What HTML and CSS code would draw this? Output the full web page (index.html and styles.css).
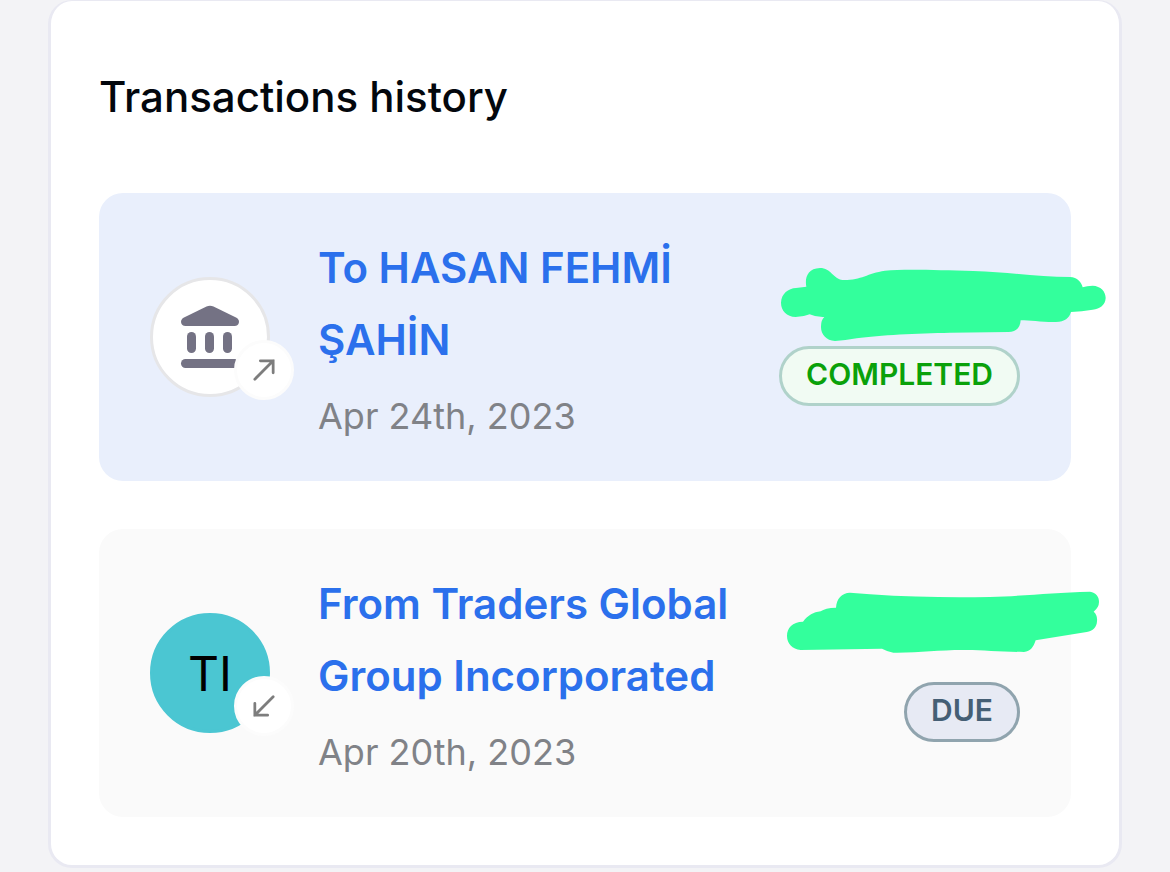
FILE: index.html
```html
<!DOCTYPE html>
<html lang="en">
<head>
  <meta charset="UTF-8">
  <meta name="viewport" content="width=device-width, initial-scale=1">
  <title>Transactions history</title>
  <link rel="stylesheet" href="styles.css">
</head>
<body>

  <main class="card">
    <h1>Transactions history</h1>

    <ul class="transactions">
      <li class="transaction outgoing">
        <div class="avatar bank">
          <svg class="bank-icon" viewBox="0 0 60 64" aria-hidden="true">
            <path d="M26.500 1.500Q30 0 33.500 1.500L56 12.500Q59 14 59 17Q58.500 21 54.500 21H5.500Q1.500 21 1 17Q1 14 4 12.500Z"/>
            <rect x="7" y="27" width="9" height="21" rx="4.500"/>
            <rect x="25" y="27" width="9" height="21" rx="4.500"/>
            <rect x="43" y="27" width="9" height="21" rx="4.500"/>
            <rect x="1" y="54" width="58" height="9" rx="4.500"/>
          </svg>
          <span class="direction">
            <svg viewBox="0 0 24 24" aria-hidden="true"><path d="M2 22 22 2M8 2H22V15"/></svg>
          </span>
        </div>
        <div class="details">
          <div class="name">To HASAN FEHMİ ŞAHİN</div>
          <div class="date">Apr 24th, 2023</div>
        </div>
        <div class="summary">
          <div class="amount">
            <svg class="marker" viewBox="30 -15 1020 300" aria-hidden="true">
              <path d="M33 143C34 116 55 100 78 99L109 95C104 70 112 40 150 39C183 39 190 72 218 75C275 76 290 55 345 47C400 42 500 45 610 48C720 52 810 66 900 66C922 67 935 82 938 97Q950 92 968 92C992 93 1007 109 1007 129C1006 150 990 162 968 164Q935 169 903 171C897 190 885 200 858 201C820 202 780 196 752 196C751 218 738 231 715 231L540 233C440 235 330 240 260 250Q225 257 195 258C168 257 152 236 153 214Q153 195 163 186Q138 187 119 178Q100 186 77 186C50 185 33 167 33 143Z"/>
            </svg>
          </div>
          <span class="badge completed">COMPLETED</span>
        </div>
      </li>

      <li class="transaction incoming">
        <div class="avatar initials">
          TI
          <span class="direction">
            <svg viewBox="0 0 24 24" aria-hidden="true"><path d="M22 2 2 22M2 9V22H16"/></svg>
          </span>
        </div>
        <div class="details">
          <div class="name">From Traders Global Group Incorporated</div>
          <div class="date">Apr 20th, 2023</div>
        </div>
        <div class="summary">
          <div class="amount">
            <svg class="marker" viewBox="30 18 1020 300" aria-hidden="true">
              <path d="M51 168C51 143 67 126 99 125C115 105 130 97 152 94Q165 84 198 83C200 55 215 39 240 38L300 43C430 52 550 53 660 51C770 48 850 37 960 35C978 37 987 50 987 66Q987 82 971 95Q983 105 981 124C980 142 969 154 950 156L797 181C790 202 782 214 762 216C700 215 640 211 590 210C510 209 450 219 370 218Q355 216 336 206L92 210C67 208 51 191 51 168Z"/>
            </svg>
          </div>
          <span class="badge due">DUE</span>
        </div>
      </li>
    </ul>
  </main>

</body>
</html>
```

FILE: styles.css
```css
* { box-sizing: border-box; }
body { margin: 0; padding: 0 48px 4px; background: #f3f3f6; color: #03070d; font-family: Inter, "Liberation Sans", sans-serif; }
h1 { margin: 0 0 48px; font-size: 42px; line-height: 96px; font-weight: 500; }

.card { padding: 48px; background: #fff; border: 3px solid #e9e9f2; border-top-width: 1px; border-radius: 24px; }
.transactions { display: flex; flex-direction: column; gap: 48px; margin: 0; padding: 0; list-style: none; }
.transaction { display: flex; align-items: center; min-height: 288px; padding: 32px 51px; border-radius: 24px; }
.outgoing { background: #e9effc; }
.incoming { background: #fafafa; }

.avatar { position: relative; display: flex; align-items: center; justify-content: center; flex: none; width: 120px; height: 120px; border: 3px solid; border-radius: 50%; }
.bank { background: #fff; border-color: #e6e6e8; }
.bank-icon { width: 60px; height: 64px; fill: #747284; }
.initials { background: #4bc6d2; border-color: #4bc6d2; color: #000; font-size: 48px; }

/* small arrow circle on the corner of the avatar */
.direction { position: absolute; right: -27px; bottom: -6px; display: flex; align-items: center; justify-content: center; width: 60px; height: 60px; background: #fff; border: 3px solid #fcfcfc; border-radius: 50%; }
.direction svg { width: 22px; height: 22px; fill: none; stroke: #7d7d7d; stroke-width: 3; stroke-linecap: round; }

.details { flex: 1; min-width: 0; margin-left: 48px; padding-top: 4px; }
.name { color: #2b70ec; font-size: 42px; line-height: 72px; font-weight: 600; }
.date { margin-top: 10px; color: #808287; font-size: 36px; line-height: 60px; }

.summary { display: flex; flex-direction: column; align-items: flex-end; flex: none; width: 240px; margin-left: 48px; }
.amount { position: relative; width: 100%; height: 72px; margin-bottom: 6px; }
.marker { position: absolute; top: -18px; right: -100px; width: 340px; height: 100px; fill: #33ff9c; }
.badge { padding: 0 24px 4px; border: 3px solid; border-radius: 30px; font-size: 30px; line-height: 50px; font-weight: 600; }
.completed { background: #f1fbf3; border-color: #b0d2ca; color: #0aa10a; }
.due { background: #e7eaf4; border-color: #90a4ae; color: #455f75; }
```
